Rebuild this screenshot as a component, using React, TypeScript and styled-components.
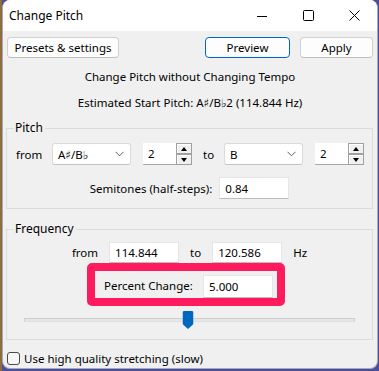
import React from 'react';
import styled, { createGlobalStyle } from 'styled-components';

const GlobalStyle = createGlobalStyle`
  html, body { margin: 0; padding: 0; }
  * { box-sizing: border-box; }
  body {
    width: 379px;
    height: 371px;
    overflow: hidden;
    font-family: "Noto Sans", "DejaVu Sans", sans-serif;
    font-size: 11.5px;
    color: #000;
  }
`;

// --- desktop + window frame ---
const Desktop = styled.div`
  width: 379px;
  height: 371px;
  padding-left: 2px;
  background: linear-gradient(to right, #8d6c40 0 2px, #4d4d9d 2px 100%);
`;

const Window = styled.div`
  width: 376px;
  height: 369px;
  border: 1px solid #a9a9b3;
  border-top: none;
  border-radius: 8px;
  background: #f0f0f0;
  overflow: hidden;
  display: flex;
  flex-direction: column;
`;

const TitleBar = styled.div`
  height: 31px;
  flex: none;
  background: #fff;
  display: flex;
  align-items: center;
  padding-left: 6px;
  font-size: 12px;
`;

const Title = styled.span`
  flex: 1;
`;

const Control = styled.div`
  width: 46px;
  height: 31px;
  display: flex;
  align-items: center;
  justify-content: center;
`;

// --- toolbar ---
const Toolbar = styled.div`
  display: flex;
  padding: 6px 4px 0 4px;
  gap: 10px;
`;

const Button = styled.button<{ $w: number; $primary?: boolean; $push?: boolean }>`
  width: ${(p) => p.$w}px;
  height: 21px;
  margin-left: ${(p) => (p.$push ? 'auto' : '0')};
  background: #fdfdfd;
  border: 1px solid ${(p) => (p.$primary ? '#0067c0' : '#d0d0d0')};
  border-bottom-color: ${(p) => (p.$primary ? '#0067c0' : '#bdbdbd')};
  border-radius: 4px;
  font: inherit;
  font-size: 11.5px;
  color: #000;
  padding: 0;
  line-height: 18px;
`;

const InfoLine = styled.div<{ $mt: number }>`
  margin-top: ${(p) => p.$mt}px;
  height: 16px;
  line-height: 16px;
  text-align: center;
`;

// --- group boxes ---
const Group = styled.fieldset<{ $mt: number; $pb: number }>`
  margin: ${(p) => p.$mt}px 4px 0 3px;
  padding: 0 0 ${(p) => p.$pb}px 0;
  border: 1px solid #dcdcdc;
  border-radius: 0;
  min-width: 0;
  display: flex;
  flex-direction: column;
`;

const Legend = styled.legend`
  margin-left: 7px;
  padding: 0 2px 0 1px;
  height: 16px;
  line-height: 16px;
  font-size: 12px;
`;

const Row = styled.div<{ $mt: number; $center?: boolean; $gap?: number }>`
  display: flex;
  align-items: center;
  margin-top: ${(p) => p.$mt}px;
  justify-content: ${(p) => (p.$center ? 'center' : 'flex-start')};
  gap: ${(p) => p.$gap ?? 0}px;
  padding-left: ${(p) => (p.$center ? 0 : 9)}px;
`;

const Label = styled.span<{ $w?: number; $pl?: number }>`
  width: ${(p) => (p.$w ? `${p.$w}px` : 'auto')};
  padding-left: ${(p) => p.$pl ?? 0}px;
  flex: none;
  white-space: nowrap;
`;

const TextBox = styled.div<{ $w: number; $h?: number }>`
  width: ${(p) => p.$w}px;
  height: ${(p) => p.$h ?? 22}px;
  background: #fff;
  border: 1px solid #e6e6e6;
  border-bottom-color: #bcbcbc;
  padding-left: 5px;
  display: flex;
  align-items: center;
  flex: none;
`;

const Combo = styled.div`
  width: 79px;
  height: 22px;
  background: #fff;
  border: 1px solid #dadada;
  border-bottom-color: #c4c4c4;
  border-radius: 3px;
  padding: 0 6px 0 5px;
  display: flex;
  align-items: center;
  justify-content: space-between;
  flex: none;
`;

const Spin = styled.div<{ $ml: number }>`
  display: flex;
  margin-left: ${(p) => p.$ml}px;
  flex: none;
`;

const SpinField = styled.div`
  width: 33px;
  height: 22px;
  background: #fff;
  border-bottom: 1px solid #a8a8a8;
  padding-left: 5px;
  display: flex;
  align-items: center;
`;

const SpinButtons = styled.div`
  width: 16px;
  height: 22px;
  display: flex;
  flex-direction: column;
`;

const SpinButton = styled.div`
  flex: 1;
  border: 1px solid #a0a0a0;
  box-shadow: inset 1px 1px 0 #fff;
  background: #f0f0f0;
  display: flex;
  align-items: center;
  justify-content: center;
`;

const Arrow = styled.div<{ $up?: boolean }>`
  width: 0;
  height: 0;
  border-left: 3.5px solid transparent;
  border-right: 3.5px solid transparent;
  ${(p) => (p.$up ? 'border-bottom: 4px solid #000;' : 'border-top: 4px solid #000;')}
`;

const Spacer = styled.div<{ $w: number }>`
  width: ${(p) => p.$w}px;
  flex: none;
`;

// --- highlight + slider ---
const Highlight = styled.div`
  align-self: flex-start;
  margin-left: 80px;
  width: 198px;
  height: 43px;
  border: 8px solid #ff1b5e;
  border-radius: 5px;
  display: flex;
  align-items: flex-start;
  padding: 4px 4px 0 9px;
  justify-content: space-between;
`;

const HighlightLabel = styled.span`
  line-height: 22px;
`;

const SliderBox = styled.div`
  position: relative;
  margin: 5px 17px 0 17px;
  height: 18px;
  display: flex;
  align-items: center;
`;

const Track = styled.div`
  flex: 1;
  height: 4px;
  background: #e6e6e6;
  border: 1px solid #cfcfcf;
  border-bottom-color: #e0e0e0;
`;

const Thumb = styled.svg`
  position: absolute;
  top: 0;
  transform: translateX(-50%);
`;

// --- checkbox row ---
const CheckRow = styled.label`
  display: flex;
  align-items: center;
  gap: 4px;
  margin: 11px 0 0 4px;
  height: 15px;
`;

const CheckBox = styled.span`
  width: 13px;
  height: 13px;
  border: 1px solid #4a4a4a;
  border-radius: 3px;
  background: #f6f6f6;
  flex: none;
`;

const Chevron = () => (
  <svg width="9" height="6" viewBox="0 0 9 6">
    <polyline points="0.5,0.8 4.5,4.8 8.5,0.8" fill="none" stroke="#606060" strokeWidth="1" />
  </svg>
);

const SpinControl: React.FC<{ value: string; ml: number }> = ({ value, ml }) => (
  <Spin $ml={ml}>
    <SpinField>{value}</SpinField>
    <SpinButtons>
      <SpinButton>
        <Arrow $up />
      </SpinButton>
      <SpinButton>
        <Arrow />
      </SpinButton>
    </SpinButtons>
  </Spin>
);

const App: React.FC = () => {
  const percent = 0.495; // slider thumb position
  return (
    <>
      <GlobalStyle />
      <Desktop>
        <Window>
          <TitleBar>
            <Title>Change Pitch</Title>
            <Control>
              <svg width="10" height="10" viewBox="0 0 10 10">
                <line x1="0" y1="5.5" x2="10" y2="5.5" stroke="#000" strokeWidth="1" />
              </svg>
            </Control>
            <Control>
              <svg width="11" height="11" viewBox="0 0 11 11">
                <rect x="0.5" y="0.5" width="10" height="10" rx="1" fill="none" stroke="#000" strokeWidth="1" />
              </svg>
            </Control>
            <Control>
              <svg width="11" height="11" viewBox="0 0 11 11">
                <path d="M0.5 0.5 L10.5 10.5 M10.5 0.5 L0.5 10.5" stroke="#000" strokeWidth="1" />
              </svg>
            </Control>
          </TitleBar>

          <Toolbar>
            <Button $w={112}>Presets &amp; settings</Button>
            <Button $w={85} $primary $push>Preview</Button>
            <Button $w={73}>Apply</Button>
          </Toolbar>

          <InfoLine $mt={11}>Change Pitch without Changing Tempo</InfoLine>
          <InfoLine $mt={10}>Estimated Start Pitch: A♯/B♭2 (114.844 Hz)</InfoLine>

          <Group $mt={9} $pb={9}>
            <Legend>Pitch</Legend>
            <Row $mt={7}>
              <Label $w={36}>from</Label>
              <Combo>
                <span>A♯/B♭</span>
                <Chevron />
              </Combo>
              <SpinControl value="2" ml={12} />
              <Label $w={32} $pl={11}>to</Label>
              <Combo>
                <span>B</span>
                <Chevron />
              </Combo>
              <SpinControl value="2" ml={12} />
            </Row>
            <Row $mt={12} $center $gap={7}>
              <Label>Semitones (half-steps):</Label>
              <TextBox $w={70}>0.84</TextBox>
            </Row>
          </Group>

          <Group $mt={12} $pb={10}>
            <Legend>Frequency</Legend>
            <Row $mt={5} $center $gap={11}>
              <Label>from</Label>
              <TextBox $w={70} $h={21}>114.844</TextBox>
              <Label>to</Label>
              <TextBox $w={70} $h={21}>120.586</TextBox>
              <Label>Hz</Label>
            </Row>
            <Highlight>
              <HighlightLabel>Percent Change:</HighlightLabel>
              <TextBox $w={70} $h={23}>5.000</TextBox>
            </Highlight>
            <SliderBox>
              <Track />
              <Thumb width="11" height="18" viewBox="0 0 11 18" style={{ left: `${percent * 100}%` }}>
                <path d="M1.5 0 H9.5 Q11 0 11 1.5 V13 L5.5 18 L0 13 V1.5 Q0 0 1.5 0 Z" fill="#0067c0" />
              </Thumb>
            </SliderBox>
          </Group>

          <CheckRow>
            <CheckBox />
            <span>Use high quality stretching (slow)</span>
          </CheckRow>
        </Window>
      </Desktop>
    </>
  );
};

export default App;
